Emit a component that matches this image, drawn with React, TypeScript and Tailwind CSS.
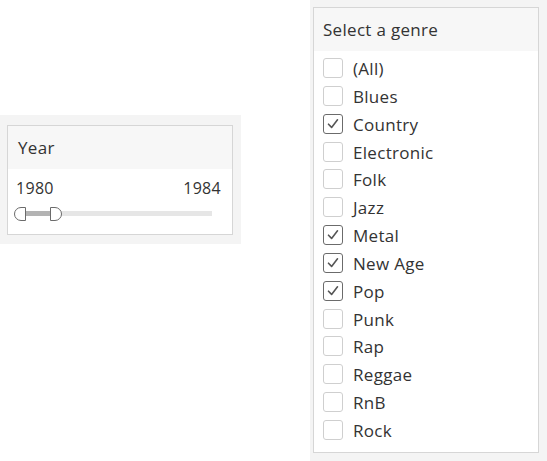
import { useState } from 'react';

type Genre = {
  name: string;
  checked: boolean;
};

const initialGenres: Genre[] = [
  { name: '(All)', checked: false },
  { name: 'Blues', checked: false },
  { name: 'Country', checked: true },
  { name: 'Electronic', checked: false },
  { name: 'Folk', checked: false },
  { name: 'Jazz', checked: false },
  { name: 'Metal', checked: true },
  { name: 'New Age', checked: true },
  { name: 'Pop', checked: true },
  { name: 'Punk', checked: false },
  { name: 'Rap', checked: false },
  { name: 'Reggae', checked: false },
  { name: 'RnB', checked: false },
  { name: 'Rock', checked: false },
];

const CheckBox = ({ checked }: { checked: boolean }) => (
  <span
    className={`flex h-[20px] w-[20px] shrink-0 items-center justify-center rounded-[3px] border bg-white ${
      checked ? 'border-[#6b6b6b]' : 'border-[#cfcfcf]'
    }`}
  >
    {checked && (
      <svg width="14" height="14" viewBox="0 0 14 14" fill="none">
        <path d="M2.5 7.2 L5.6 10.4 L11.5 2.8" stroke="#555555" strokeWidth="1.6" strokeLinecap="round" strokeLinejoin="round" />
      </svg>
    )}
  </span>
);

const YearFilter = () => (
  <div className="mt-[115px] h-[129px] w-[241px] bg-[#f4f4f4] pl-[7px] pt-[10px]">
    <div className="h-[110px] w-[226px] border border-[#d6d6d6] bg-white">
      <div className="flex h-[43px] items-center bg-[#f7f7f7] pl-[10px] text-[17px] tracking-[0.3px] text-[#333333]">Year</div>
      <div className="flex justify-between pl-[8px] pr-[11px] pt-[7px] text-[16px] leading-[24px] tracking-[0.3px] text-[#333333]">
        <span>1980</span>
        <span>1984</span>
      </div>
      <div className="relative ml-[8px] mt-[7px] h-[14px] w-[196px]">
        <div className="absolute left-0 right-0 top-[4px] h-[5px] bg-[#e6e6e6]" />
        <div className="absolute left-[8px] top-[4px] h-[5px] w-[30px] bg-[#b3b3b3]" />
        <div className="absolute left-[-2px] top-0 h-[14px] w-[12px] rounded-l-[7px] border border-[#6b6b6b] bg-white" />
        <div className="absolute left-[34px] top-0 h-[14px] w-[12px] rounded-r-[7px] border border-[#6b6b6b] bg-white" />
      </div>
    </div>
  </div>
);

const GenreFilter = () => {
  const [genres, setGenres] = useState(initialGenres);

  const toggle = (name: string) => {
    setGenres((prev) => prev.map((g) => (g.name === name ? { ...g, checked: !g.checked } : g)));
  };

  return (
    <div className="h-[461px] w-[237px] bg-[#f4f4f4] pl-[3px] pt-[7px]">
      <div className="h-[446px] w-[226px] border border-[#d6d6d6] bg-white">
        <div className="flex h-[43px] items-center bg-[#f7f7f7] pl-[9px] text-[17px] tracking-[0.3px] text-[#333333]">Select a genre</div>
        <div className="pt-[7px]">
          {genres.map((g) => (
            <div
              key={g.name}
              onClick={() => toggle(g.name)}
              className="flex h-[27.85px] cursor-pointer items-start gap-[10px] pl-[9px]"
            >
              <CheckBox checked={g.checked} />
              <span className="text-[17px] leading-[22px] tracking-[0.3px] text-[#333333]">{g.name}</span>
            </div>
          ))}
        </div>
      </div>
    </div>
  );
};

const App = () => (
  <div className="flex h-[461px] w-[547px] items-start gap-[69px] bg-white font-['Open_Sans',sans-serif]">
    <YearFilter />
    <GenreFilter />
  </div>
);

export default App;
